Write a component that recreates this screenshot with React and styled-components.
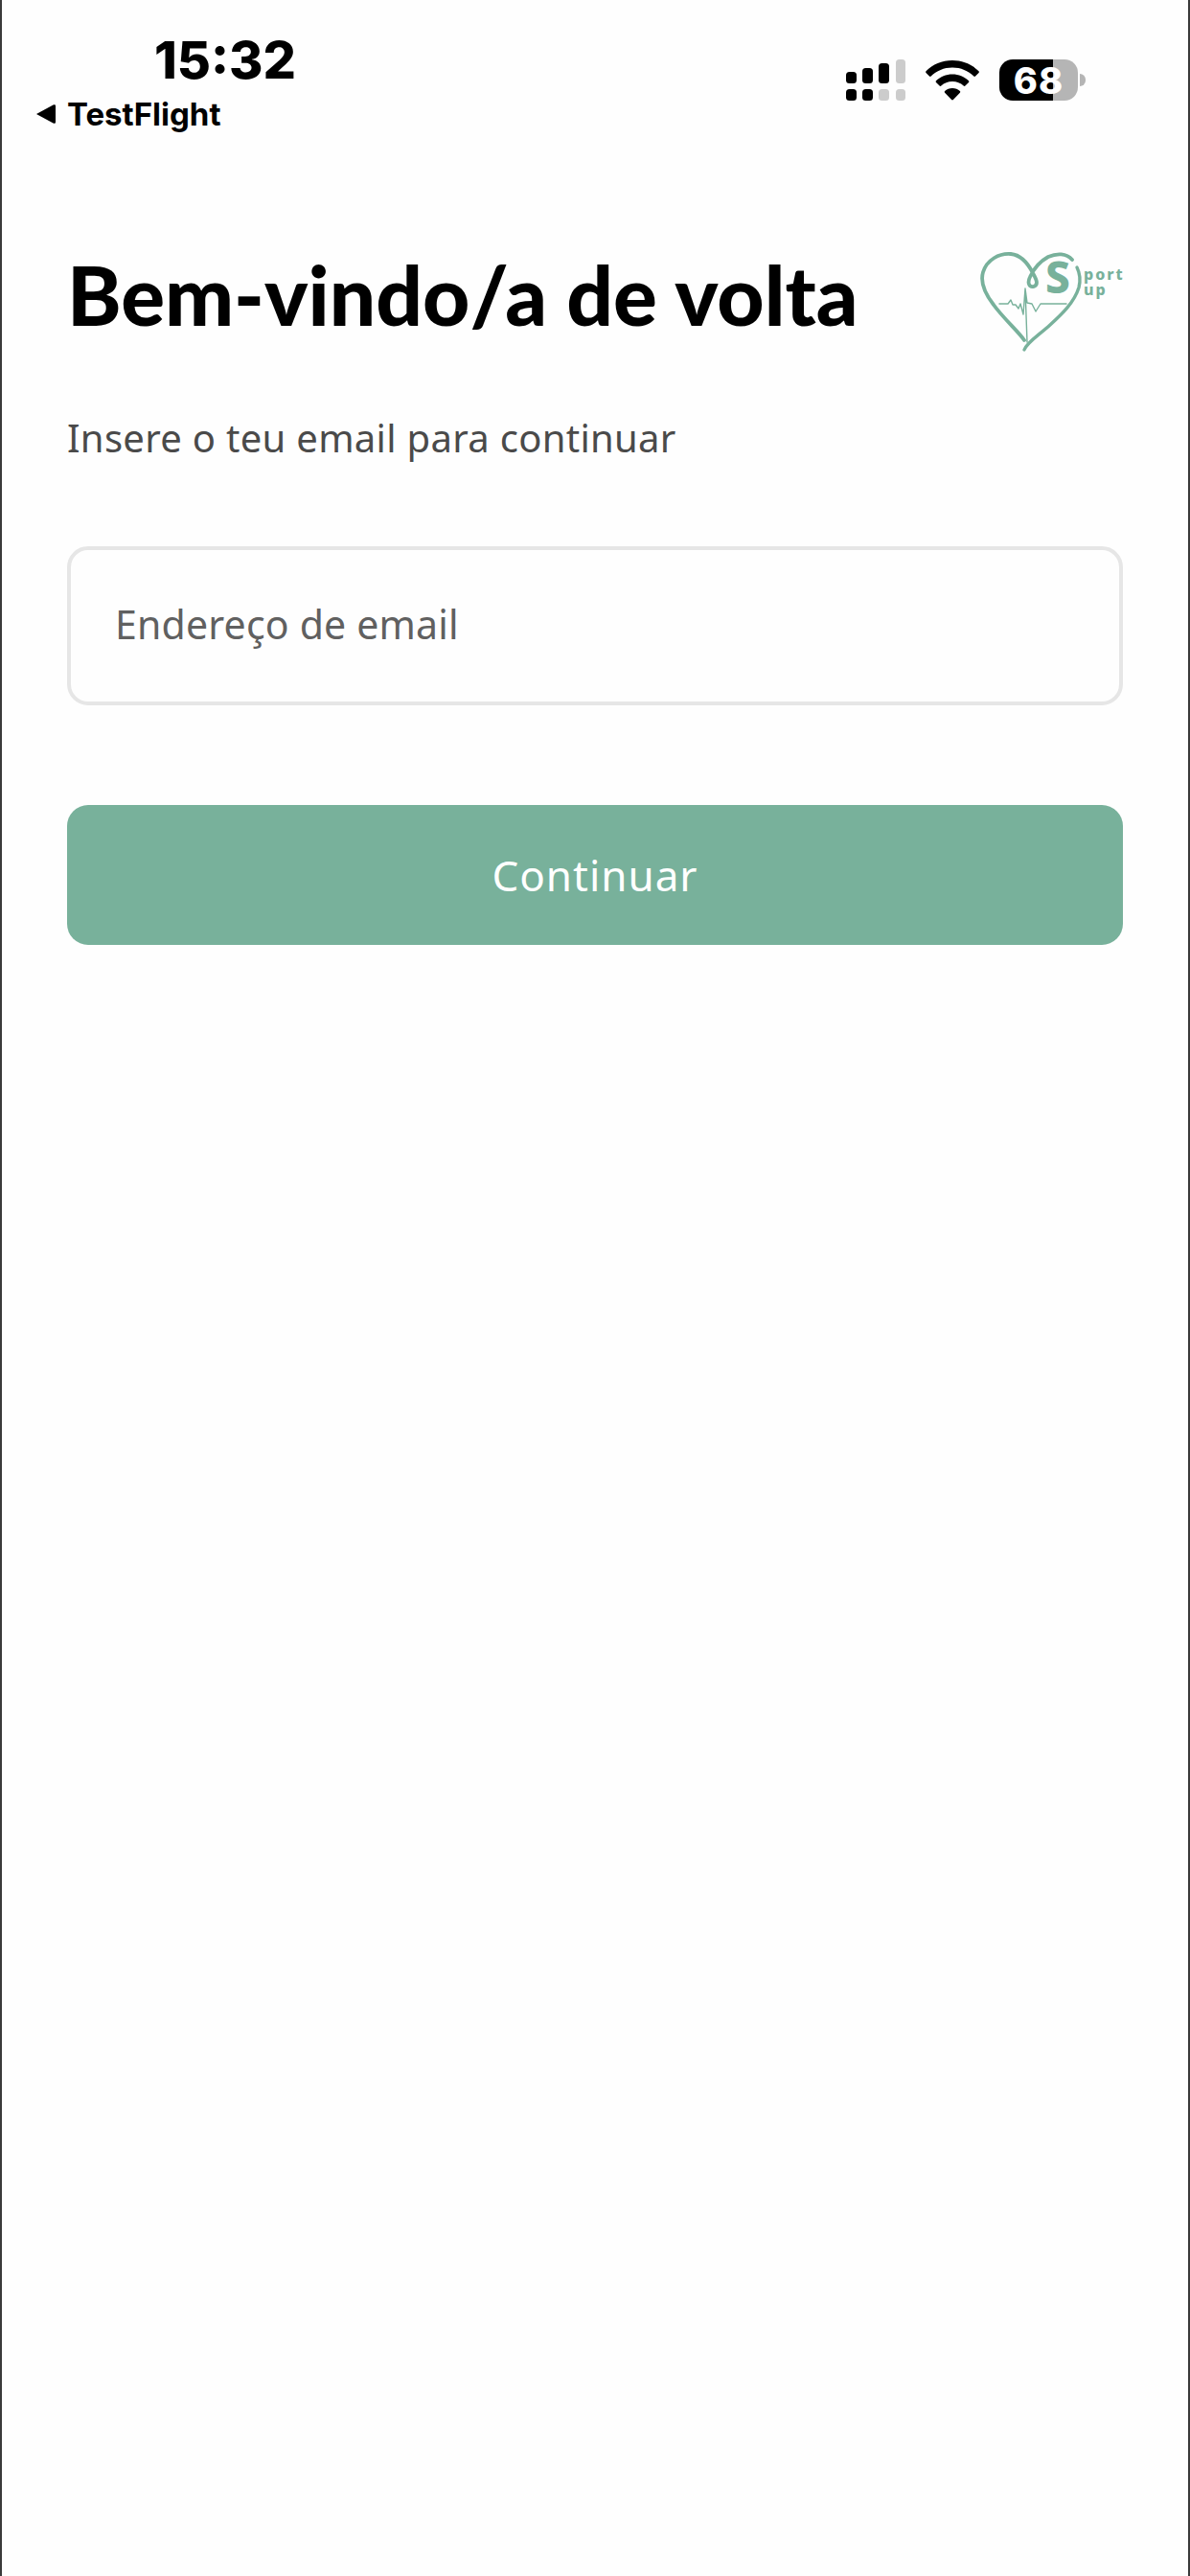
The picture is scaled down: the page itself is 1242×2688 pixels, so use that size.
import React from 'react'
import styled, { createGlobalStyle } from 'styled-components'

const GlobalStyle = createGlobalStyle`
  html, body {
    margin: 0;
    padding: 0;
    background: #fefefe;
  }
  * {
    box-sizing: border-box;
  }
`

const Screen = styled.div`
  width: 1242px;
  height: 2688px;
  overflow: hidden;
  background: #fefefe;
  border-left: 2px solid #3a3a3a;
  border-right: 2px solid #3a3a3a;
`
const StatusBar = styled.div`
  display: flex;
  justify-content: space-between;
  align-items: flex-start;
  height: 190px;
  padding: 32px 107px 0 35px;
  font-family: Inter, 'Liberation Sans', sans-serif;
  color: #000;
`
const StatusLeft = styled.div`
  display: flex;
  flex-direction: column;
`
const Time = styled.div`
  margin-left: 124px;
  font-size: 54px;
  font-weight: 800;
  line-height: 62px;
`
const BackLink = styled.div`
  display: flex;
  align-items: center;
  gap: 11px;
  margin-top: 5px;
  font-size: 33px;
  font-weight: 700;
  line-height: 40px;
`
const BackArrow = styled.svg`
  width: 22px;
  height: 22px;
`
const StatusRight = styled.div`
  display: flex;
  align-items: center;
  gap: 21px;
  margin-top: 30px;
`
const Battery = styled.div`
  display: flex;
  align-items: center;
  gap: 2px;
`
const BatteryBody = styled.div`
  display: flex;
  align-items: center;
  justify-content: center;
  width: 82px;
  height: 43px;
  border-radius: 14px;
  background: linear-gradient(to right, #000 0 68%, #b5b5b5 68% 100%);
  color: #fff;
  font-size: 38px;
  font-weight: 800;
  line-height: 1;
  letter-spacing: 1px;
`
const BatteryCap = styled.div`
  width: 6px;
  height: 13px;
  border-radius: 0 6px 6px 0;
  background: #b5b5b5;
`
const Content = styled.main`
  display: flex;
  flex-direction: column;
  padding: 0 68px;
`
const HeaderRow = styled.div`
  display: flex;
  justify-content: space-between;
  align-items: flex-start;
  height: 186px;
  padding-top: 64px;
`
const Title = styled.h1`
  margin: -3px 0 0;
  font-family: Lato, 'Noto Sans', sans-serif;
  font-size: 85.5px;
  font-weight: 900;
  line-height: 112px;
  color: #000;
`
const Logo = styled.svg`
  width: 155px;
  height: 116px;
  margin-right: -3px;
`
const LogoS = styled.text`
  font-family: 'Noto Sans', sans-serif;
  font-size: 46px;
  font-weight: 800;
  fill: #78b19b;
`
const LogoWord = styled.text`
  font-family: 'Noto Sans', sans-serif;
  font-size: 16px;
  font-weight: 800;
  letter-spacing: 2px;
  fill: #78b19b;
`
const Subtitle = styled.p`
  margin: 53px 0 0;
  font-family: 'Noto Sans', sans-serif;
  font-size: 40px;
  letter-spacing: 0.3px;
  line-height: 56px;
  color: #4a4a4a;
`
const EmailInput = styled.input`
  display: block;
  width: 100%;
  height: 166px;
  margin-top: 85px;
  padding: 0 46px 4px;
  border: 4px solid #e6e6e6;
  border-radius: 22px;
  background: #fefefe;
  outline: none;
  font-family: 'Noto Sans', sans-serif;
  font-size: 41px;
  letter-spacing: 0.2px;
  color: #606060;
  &::placeholder {
    color: #606060;
    opacity: 1;
  }
`
const SubmitButton = styled.button`
  display: block;
  width: 100%;
  height: 146px;
  margin-top: 104px;
  border: none;
  border-radius: 22px;
  background: #78b19b;
  font-family: 'Noto Sans', sans-serif;
  font-size: 44px;
  letter-spacing: 1px;
  color: #fff;
`

const SignalIcon = () => (
  <svg width="62" height="43" viewBox="0 0 62 43">
    <rect x="0" y="13" width="11" height="12" rx="3.5" fill="#000" />
    <rect x="17" y="9" width="11" height="16" rx="3.5" fill="#000" />
    <rect x="34" y="4" width="11" height="21" rx="3.5" fill="#000" />
    <rect x="52" y="0" width="10" height="25" rx="3.5" fill="#ccc" />
    <rect x="0" y="31" width="11" height="12" rx="3.5" fill="#000" />
    <rect x="17" y="31" width="11" height="12" rx="3.5" fill="#000" />
    <rect x="34" y="31" width="11" height="12" rx="3.5" fill="#ccc" />
    <rect x="52" y="31" width="10" height="12" rx="3.5" fill="#ccc" />
  </svg>
)

const WifiIcon = () => (
  <svg width="56" height="42" viewBox="0 0 56 42">
    <path d="M28 0C17 0 7.500 4.200 0.500 11.200C0 11.700 0 12.400 0.500 12.900L4 16.500C4.500 17 5.200 17 5.700 16.500C11.400 11 19.300 7.600 28 7.600C36.700 7.600 44.600 11 50.300 16.500C50.800 17 51.500 17 52 16.500L55.500 12.900C56 12.400 56 11.700 55.500 11.200C48.500 4.200 39 0 28 0Z" fill="#000" />
    <path d="M28 14.500C21.500 14.500 15.500 17 11 21.200C10.500 21.700 10.500 22.400 11 22.900L14.600 26.500C15 27 15.800 27 16.300 26.500C19.400 23.800 23.500 22.100 28 22.100C32.500 22.100 36.600 23.800 39.700 26.500C40.200 27 41 27 41.400 26.500L45 22.900C45.500 22.400 45.500 21.700 45 21.200C40.500 17 34.500 14.500 28 14.500Z" fill="#000" />
    <path d="M28 29C25 29 22.200 30.100 20.100 32C19.600 32.500 19.600 33.200 20.100 33.700L27.100 41C27.600 41.500 28.400 41.500 28.900 41L35.900 33.700C36.400 33.200 36.400 32.500 35.900 32C33.800 30.100 31 29 28 29Z" fill="#000" />
  </svg>
)

// heart traced from the reference, stroke widths vary along the outline
const SportLogo = () => (
  <Logo viewBox="20 14 155 116">
    <g fill="none" stroke="#78b19b" strokeLinecap="round">
      <path d="M69 115C64 107 47 92 37 78C27 65 23 54 26 44C30 31 43 24 55 25C65 26 73 35 78 45C82 52 84 57 79 59C74 60 72 55 75 49C79 40 85 33 94 28C103 24 113 24 119 31" strokeWidth="3.800" />
      <path d="M69 125C72 117 84 110 96 99C108 88 121 76 126 60C128 52 127 45 124 39" strokeWidth="3.400" />
      <path d="M43 77H52L55 73L57 78L60 78L63 82L65 77L68 88L70 61L72 117M70 61L72 76L77 77L81 85L86 77H113" strokeWidth="1.400" strokeLinejoin="round" />
    </g>
    <LogoS x="91" y="66">S</LogoS>
    <LogoWord x="131" y="52">port</LogoWord>
    <LogoWord x="131" y="68">up</LogoWord>
  </Logo>
)

const App = () => {
  return (
    <>
      <GlobalStyle />
      <Screen>
        <StatusBar>
          <StatusLeft>
            <Time>15:32</Time>
            <BackLink>
              <BackArrow viewBox="0 0 22 22">
                <path d="M1 11L18.500 1.500C20.500 0.800 21 1.500 21 3V19C21 20.500 20.500 21.200 18.500 20.500Z" fill="#000" />
              </BackArrow>
              TestFlight
            </BackLink>
          </StatusLeft>
          <StatusRight>
            <SignalIcon />
            <WifiIcon />
            <Battery>
              <BatteryBody>68</BatteryBody>
              <BatteryCap />
            </Battery>
          </StatusRight>
        </StatusBar>
        <Content>
          <HeaderRow>
            <Title>Bem-vindo/a de volta</Title>
            <SportLogo />
          </HeaderRow>
          <Subtitle>Insere o teu email para continuar</Subtitle>
          <EmailInput type="email" placeholder="Endereço de email" />
          <SubmitButton type="button">Continuar</SubmitButton>
        </Content>
      </Screen>
    </>
  )
}

export default App
